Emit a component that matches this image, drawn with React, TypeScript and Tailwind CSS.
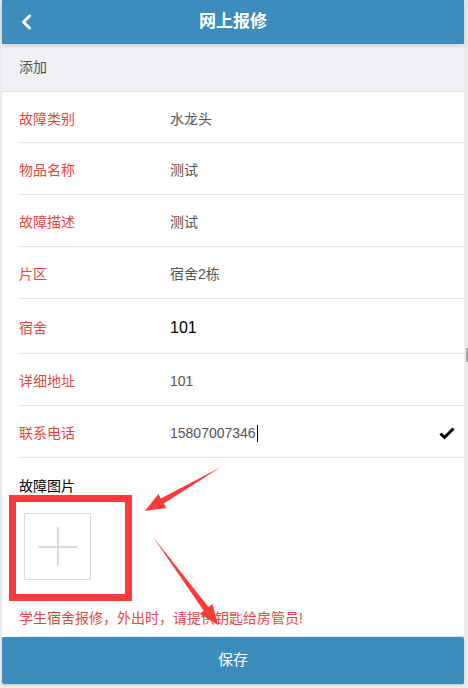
import type { ReactNode } from 'react'

const font = { fontFamily: '"Liberation Sans", "Noto Sans CJK SC", sans-serif' }

interface Field {
  label: string
  value: ReactNode
  h: string
}

const fields: Field[] = [
  { label: '故障类别', value: '水龙头', h: 'h-[51px]' },
  { label: '物品名称', value: '测试', h: 'h-[52px]' },
  { label: '故障描述', value: '测试', h: 'h-[52px]' },
  { label: '片区', value: '宿舍2栋', h: 'h-[52px]' },
  { label: '宿舍', value: <span className="text-[16px] text-black">101</span>, h: 'h-[55px]' },
  { label: '详细地址', value: '101', h: 'h-[52px]' },
]

function Row({ label, value, h, right }: Field & { right?: ReactNode }) {
  return (
    <div className={`flex ${h} items-center border-b border-[#e1e1e1] pt-[4px] pr-[9px]`}>
      <div className="w-[151px] text-[14px] text-[#e2473e]">{label}</div>
      <div className="flex-1 text-[14px] text-[#555]">{value}</div>
      {right}
    </div>
  )
}

export default function App() {
  return (
    <div className="relative flex h-[688px] w-[468px] overflow-hidden bg-[#ebebeb]" style={font}>
      <div className="w-[2px]" />

      <div className="flex w-[462px] flex-col">
        <header className="relative z-10 flex h-[44px] items-center bg-[#3c8dbc] shadow-[0_1px_5px_rgba(0,0,0,0.18)]">
          <div className="w-[60px] pl-[18px]">
            <svg width="12" height="16" viewBox="0 0 12 16">
              <path d="M9.5 2 L3.5 8 L9.5 14" fill="none" stroke="#fff" strokeWidth="3" strokeLinecap="round" strokeLinejoin="round" />
            </svg>
          </div>
          <h1 className="flex-1 text-center text-[17px] font-bold text-white">网上报修</h1>
          <div className="w-[60px]" />
        </header>

        <div className="flex h-[48px] items-center border-b border-[#e0e0e0] bg-[#efeff4] pl-[17px] text-[14px] text-[#555]">
          添加
        </div>

        <div className="bg-white pl-[17px]">
          {fields.map(f => (
            <Row key={f.label} {...f} />
          ))}
          <Row
            label="联系电话"
            h="h-[52px]"
            value={
              <span className="inline-flex items-center">
                15807007346
                <span className="ml-[1px] inline-block h-[17px] w-[1px] bg-black" />
              </span>
            }
            right={
              <svg width="16" height="13" viewBox="0 0 16 13" className="mr-[0px]">
                <path d="M1.5 6.5 L5.5 10.5 L14.5 1.5" fill="none" stroke="#000" strokeWidth="3" />
              </svg>
            }
          />
        </div>

        <div className="bg-white pl-[17px]">
          <div className="border-b border-[#e1e1e1] pt-[18px] pb-[8px]">
            <div className="h-[20px] text-[14px] leading-[20px] text-black">故障图片</div>
            <div className="relative mt-[17px] ml-[5px] h-[67px] w-[67px] border border-[#dcdcdc]">
              <div className="absolute left-[13px] top-[32px] h-[2px] w-[39px] bg-[#dadada]" />
              <div className="absolute left-[32px] top-[13px] h-[39px] w-[2px] bg-[#dadada]" />
            </div>
            <div className="mt-[28px] h-[20px] text-[14px] leading-[20px] text-[#e2473e]">
              学生宿舍报修，外出时，请提供钥匙给房管员!
            </div>
          </div>
        </div>

        <button className="h-[47px] rounded-[2px] bg-[#3c8dbc] text-[15px] text-white shadow-[0_1px_2px_rgba(0,0,0,0.2)]">
          保存
        </button>
        <div className="flex-1" />
      </div>

      <div className="w-[4px] pt-[348px]">
        <div className="ml-[2px] h-[14px] w-[2px] bg-[#a6a6a6]" />
      </div>

      {/* annotation overlay */}
      <svg className="pointer-events-none absolute inset-0" width="468" height="688" viewBox="0 0 468 688">
        <rect x="12.5" y="498.5" width="116" height="99" fill="none" stroke="#fc3a3a" strokeWidth="7" />
        <polygon points="221,467 160.8,498.4 158.3,494.1 145,511 166.3,507.9 163.8,503.6" fill="#fc3a3a" />
        <polygon points="153,537 208.5,607.1 212.5,604.1 218,625 199.7,613.7 203.7,610.7" fill="#fc3a3a" />
      </svg>
    </div>
  )
}
